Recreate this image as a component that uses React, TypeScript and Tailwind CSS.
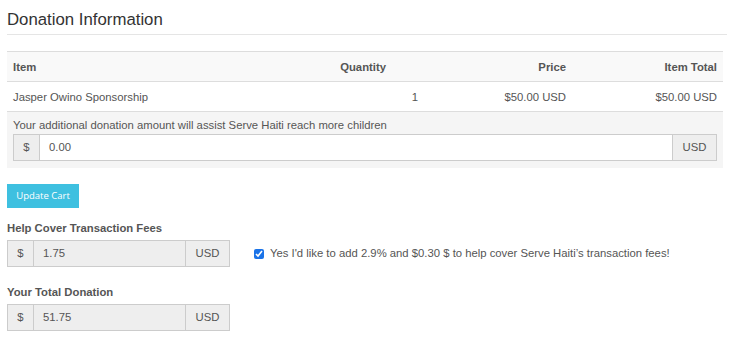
import React from 'react';

function AddonGroup({ value, readOnly, className }: { value: string; readOnly?: boolean; className?: string }) {
  const fill = readOnly ? 'bg-[#eeeeee]' : 'bg-white';
  return (
    <div className={`flex h-[27px] border border-[#cccccc] text-[11.3px] text-[#555] ${className ?? ''}`}>
      <div className="flex w-[26px] items-center justify-center border-r border-[#cccccc] bg-[#eeeeee]">$</div>
      <div className={`flex flex-1 items-center pl-[9px] ${fill}`}>{value}</div>
      <div className="flex w-[44px] items-center justify-center border-l border-[#cccccc] bg-[#eeeeee]">USD</div>
    </div>
  );
}

export default function App() {
  return (
    <div className="w-[734px] h-[339px] bg-white px-[7px] font-['Liberation_Sans',Arial,sans-serif] text-[11.3px] text-[#555]">
      <h2 className="border-b border-[#e5e5e5] pt-[10px] pb-[4px] text-[16.8px] leading-[20px] text-[#333]">
        Donation Information
      </h2>

      <div className="mt-[16px] w-[716px]">
        <div className="flex h-[31px] items-center border-y border-[#dddddd] bg-[#f9f9f9] px-[6px] font-bold leading-[14px]">
          <div className="flex-1">Item</div>
          <div className="w-[100px] pr-[6px] text-right">Quantity</div>
          <div className="w-[180px] pr-[6px] text-right">Price</div>
          <div className="w-[145px] text-right">Item Total</div>
        </div>
        <div className="flex h-[30px] items-center border-b border-[#dddddd] px-[6px] leading-[14px]">
          <div className="flex-1">Jasper Owino Sponsorship</div>
          <div className="w-[60px] text-center">1</div>
          <div className="w-[127px] pr-[6px] text-right">$50.00 USD</div>
          <div className="w-[145px] text-right">$50.00 USD</div>
        </div>
        <div className="bg-[#f5f5f5] px-[6px] pt-[6px] pb-[7px]">
          <p className="leading-[14px]">Your additional donation amount will assist Serve Haiti reach more children</p>
          <AddonGroup value="0.00" className="mt-[2px] w-[704px]" />
        </div>
      </div>

      <button className="mt-[16px] h-[24px] w-[72px] bg-[#3ec0e0] font-['Open_Sans',sans-serif] text-[9.5px] text-white">
        Update Cart
      </button>

      <div className="mt-[13px] font-bold leading-[14px]">Help Cover Transaction Fees</div>
      <div className="mt-[5px] flex items-center">
        <AddonGroup value="1.75" readOnly className="w-[223px]" />
        <label className="ml-[24px] flex items-center">
          <input type="checkbox" defaultChecked className="m-0 h-[10px] w-[10px] accent-[#1a73e8]" />
          <span className="ml-[6px]">Yes I'd like to add 2.9% and $0.30 $ to help cover Serve Haiti’s transaction fees!</span>
        </label>
      </div>

      <div className="mt-[18px] font-bold leading-[14px]">Your Total Donation</div>
      <AddonGroup value="51.75" readOnly className="mt-[5px] w-[223px]" />
    </div>
  );
}
